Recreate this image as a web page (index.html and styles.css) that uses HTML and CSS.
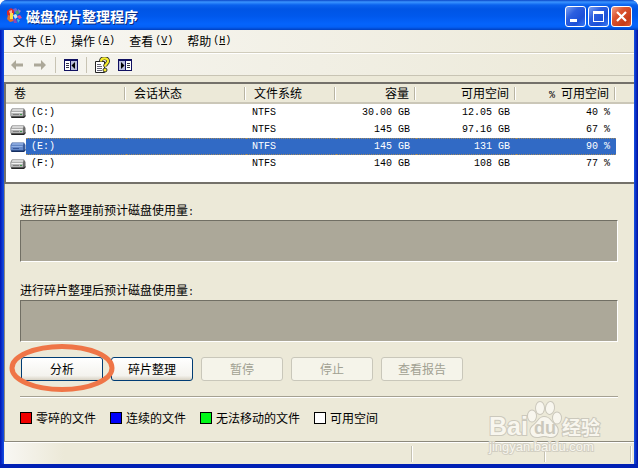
FILE: index.html
```html
<!DOCTYPE html>
<html lang="zh-CN">
<head>
<meta charset="utf-8">
<title>磁盘碎片整理程序</title>
<link rel="stylesheet" href="styles.css">
</head>
<body>
<svg class="defs" aria-hidden="true">
  <symbol id="drive" viewBox="0 0 16 10">
    <path d="M2 0.5H14L15.5 3V8L14 9.5H1.5L0.5 8V3Z" fill="#6c6c6c"/>
    <path d="M2.5 1H13.5L13 3.5H1Z" fill="#d6d6d6"/>
    <path d="M1 3.5H13V8.5H1Z" fill="#b4b4b4"/>
    <path d="M1.500 4H12.500V5H1.500Z" fill="#f2f2f2"/>
    <path d="M3 6H9V7H3Z" fill="#808080"/>
    <path d="M10 6H12V7H10Z" fill="#3f9b4b"/>
    <path d="M1 8.500H14L15.500 7V8.500L14 10H1.500Z" fill="#222"/>
  </symbol>
  <symbol id="drive-on" viewBox="0 0 16 10">
    <path d="M2 0.5H14L15.5 3V8L14 9.5H1.5L0.5 8V3Z" fill="#3a5c9c"/>
    <path d="M2.5 1H13.500L13 3.500H1Z" fill="#86a5dc"/>
    <path d="M1 3.500H13V8.500H1Z" fill="#6488c8"/>
    <path d="M1.500 4H12.500V5H1.500Z" fill="#93b1e6"/>
    <path d="M3 6H9V7H3Z" fill="#39589a"/>
    <path d="M1 8.500H14L15.500 7V8.500L14 10H1.500Z" fill="#152e60"/>
  </symbol>
</svg>
<div class="window">
  <header class="titlebar">
    <svg class="app-icon" viewBox="0 0 16 16" width="16" height="16" aria-hidden="true">
      <path d="M1 3L5 0L8 2V6L4 9L1 7Z" fill="#d92b2b"/>
      <path d="M2 7L6 8L8 13L4 14L1 11Z" fill="#e0722a"/>
      <path d="M3 3L6 2V5L4 6Z" fill="#f6b4a0"/>
      <path d="M4 5H7V11H4Z" fill="#ffe14a"/>
      <path d="M7 1L10 0L12 3L9 5Z" fill="#6d62d8"/>
      <path d="M9 4L12 2L14 5L11 7Z" fill="#46a56a"/>
      <path d="M12 1L15 3L13 5Z" fill="#a07cc8"/>
      <path d="M7 7L10 6L12 9L9 11Z" fill="#c5e8ef"/>
      <path d="M11 8L14 7L16 10L13 11Z" fill="#e34d91"/>
      <path d="M7 11L10 11L11 15L8 15Z" fill="#8947bd"/>
      <path d="M11 11L14 12L12 15Z" fill="#43b5dd"/>
    </svg>
    <h1>磁盘碎片整理程序</h1>
    <div class="controls">
      <button class="ctl" aria-label="最小化"><svg viewBox="0 0 19 19" width="19" height="19"><path d="M4 12H11V15H4Z" fill="#fff"/></svg></button>
      <button class="ctl" aria-label="最大化"><svg viewBox="0 0 19 19" width="19" height="19"><path d="M4 4H15V15H4ZM5 7V14H14V7Z" fill="#fff" fill-rule="evenodd"/></svg></button>
      <button class="ctl close" aria-label="关闭"><svg viewBox="0 0 19 19" width="19" height="19"><path d="M5 5L14 14M14 5L5 14" stroke="#fff" stroke-width="2.200"/></svg></button>
    </div>
  </header>
  <nav class="menubar">
    <button>文件<span class="key">(<u>F</u>)</span></button>
    <button>操作<span class="key">(<u>A</u>)</span></button>
    <button>查看<span class="key">(<u>V</u>)</span></button>
    <button>帮助<span class="key">(<u>H</u>)</span></button>
  </nav>
  <div class="toolbar">
    <div class="group">
      <button aria-label="后退" disabled><svg viewBox="0 0 16 16" width="16" height="16"><path d="M2 8L7 3V6.500H14V9.500H7V13Z" fill="#aca899"/></svg></button>
      <button aria-label="前进" disabled><svg viewBox="0 0 16 16" width="16" height="16"><path d="M14 8L9 3V6.500H2V9.500H9V13Z" fill="#aca899"/></svg></button>
    </div>
    <div class="group">
      <button aria-label="隐藏控制台树"><svg viewBox="0 0 16 16" width="16" height="16"><path d="M1 2H15V14H1Z" fill="#101060"/><path d="M2 4H14V13H2Z" fill="#b9bddb"/><path d="M2 4H7V13H2Z" fill="#fff"/><path d="M7 4H8V13H7Z" fill="#101060"/><path d="M3 6H6M3 8H6M3 10H6" stroke="#334" transform="translate(0 .5)"/><path d="M12 5V12L8.500 8.500Z" fill="#000"/></svg></button>
    </div>
    <div class="group">
      <button aria-label="帮助"><svg viewBox="0 0 16 16" width="16" height="16"><path d="M1.500 4.500H10.500V15.500H1.500Z" fill="#fff" stroke="#222"/><path d="M3 7.500H7M3 9.500H8M3 11.500H8M3 13.500H8" stroke="#667"/><path d="M7 4C7 0 14 0 14 4C14 7 11 7 11 9.500" fill="none" stroke="#333" stroke-width="4"/><path d="M7 4.500C7 0.500 14 0.500 14 4C14 7 11 7 11 9.500" fill="none" stroke="#f7ed2c" stroke-width="2.200"/><circle cx="11" cy="13" r="2" fill="#f7ed2c" stroke="#333"/></svg></button>
      <button aria-label="显示操作窗格"><svg viewBox="0 0 16 16" width="16" height="16"><path d="M1 2H15V14H1Z" fill="#101060"/><path d="M2 4H14V13H2Z" fill="#b9bddb"/><path d="M9 4H14V13H9Z" fill="#fff"/><path d="M8 4H9V13H8Z" fill="#101060"/><path d="M10 6H13M10 8H13M10 10H13" stroke="#334" transform="translate(0 .5)"/><path d="M4 5V12L7.500 8.500Z" fill="#000"/></svg></button>
    </div>
  </div>
  <main>
    <section class="volumes">
      <table>
        <colgroup><col class="c-wide"><col class="c-wide"><col class="c-fs"><col class="c-cap"><col class="c-free"><col class="c-free"><col></colgroup>
        <thead>
          <tr><th>卷</th><th>会话状态</th><th>文件系统</th><th class="num">容量</th><th class="num">可用空间</th><th class="num"><span class="key">% </span>可用空间</th><td></td></tr>
        </thead>
        <tbody>
          <tr><td><div class="vol"><svg width="16" height="10"><use href="#drive"/></svg><span>(C:)</span></div></td><td></td><td>NTFS</td><td class="num">30.00 GB</td><td class="num">12.05 GB</td><td class="num">40 %</td><td></td></tr>
          <tr><td><div class="vol"><svg width="16" height="10"><use href="#drive"/></svg><span>(D:)</span></div></td><td></td><td>NTFS</td><td class="num">145 GB</td><td class="num">97.16 GB</td><td class="num">67 %</td><td></td></tr>
          <tr class="selected"><td><div class="vol"><svg width="16" height="10"><use href="#drive-on"/></svg><span>(E:)</span></div></td><td></td><td>NTFS</td><td class="num">145 GB</td><td class="num">131 GB</td><td class="num">90 %</td><td></td></tr>
          <tr><td><div class="vol"><svg width="16" height="10"><use href="#drive"/></svg><span>(F:)</span></div></td><td></td><td>NTFS</td><td class="num">140 GB</td><td class="num">108 GB</td><td class="num">77 %</td><td></td></tr>
        </tbody>
      </table>
    </section>
    <section class="panel">
      <div class="usage">
        <p>进行碎片整理前预计磁盘使用量<span class="key">:</span></p>
        <div class="bar"></div>
      </div>
      <div class="usage">
        <p>进行碎片整理后预计磁盘使用量<span class="key">:</span></p>
        <div class="bar"></div>
      </div>
      <div class="actions">
        <div class="marked">
          <button class="push">分析</button>
          <svg class="ring" viewBox="0 0 106 50" width="106" height="50" aria-hidden="true"><ellipse cx="53" cy="25" rx="50" ry="21.500" fill="none" stroke="#ef7547" stroke-width="5"/></svg>
        </div>
        <button class="push">碎片整理</button>
        <button class="push" disabled>暂停</button>
        <button class="push" disabled>停止</button>
        <button class="push" disabled>查看报告</button>
      </div>
      <ul class="legend">
        <li><i class="chip red"></i>零碎的文件</li>
        <li><i class="chip blue"></i>连续的文件</li>
        <li><i class="chip green"></i>无法移动的文件</li>
        <li><i class="chip white"></i>可用空间</li>
      </ul>
    </section>
  </main>
  <footer class="status"><div class="cell main-cell"></div><div class="cell mid-cell"></div><div class="cell last-cell"></div></footer>
  <svg class="watermark" viewBox="0 0 120 58" width="120" height="58" aria-hidden="true">
    <g class="mark">
      <text x="3" y="36" class="brand">Bai</text>
      <ellipse cx="46" cy="17" rx="4" ry="5.500"/>
      <ellipse cx="54" cy="9" rx="4" ry="6"/>
      <ellipse cx="64" cy="9" rx="4" ry="6" transform="rotate(8 64 9)"/>
      <ellipse cx="71" cy="19" rx="4" ry="5.500"/>
      <path d="M58 18C64 18 65 23 69 26C74 30 72 38 65 38C61 38 62 37 58 37C54 37 55 38 51 38C44 38 42 30 48 26C52 23 53 18 58 18Z"/>
      <text x="48" y="35" class="du">du</text>
      <text x="76" y="36" class="cn">经验</text>
    </g>
    <text x="3" y="52" class="site">jingyan.baidu.com</text>
  </svg>
</div>
</body>
</html>
```
FILE: styles.css
```css
* { box-sizing: border-box; }

body {
  margin: 0;
  background: #fff;
  color: #000;
  font: 12px/16px "Noto Sans CJK SC", sans-serif;
}

button {
  margin: 0;
  padding: 0;
  border: 0;
  background: none;
  color: inherit;
  font: inherit;
}

svg { display: block; flex: none; }

.defs { position: absolute; width: 0; height: 0; }

.key { font: 10px/10px "Liberation Mono", monospace; }

.window {
  position: relative;
  display: flex;
  flex-direction: column;
  min-height: 100vh;
  padding: 0 4px 4px;
  border-radius: 7px 7px 0 0;
  background: linear-gradient(90deg, #0014b4 0, #1450e4 4px, #1450e4 calc(100% - 4px), #0010a0 100%);
  box-shadow: inset 0 -4px #0020b4;
}

.titlebar {
  display: flex;
  align-items: center;
  height: 30px;
  margin: 0 -4px;
  padding: 2px 6px 0;
  border-radius: 7px 7px 0 0;
  background: linear-gradient(#0a46c8 0, #3a94ff 2px, #0a62ee 5px, #0055e5 9px, #0058ec 16px, #0464fc 24px, #0460f6 27px, #0040c0 30px);
}

h1 {
  flex: 1;
  margin: 0 0 0 4px;
  color: #fff;
  font: bold 14px/20px "Noto Sans CJK SC", sans-serif;
  text-shadow: 1px 1px #0a2a80;
}

.controls { display: flex; gap: 2px; }

.ctl {
  width: 21px;
  height: 21px;
  border: 1px solid #fff;
  border-radius: 3px;
  background: linear-gradient(135deg, #7ba0f0, #2c5fe0 35%, #1c50d8 70%, #3a7af4);
}

.close { background: linear-gradient(135deg, #f0a088, #dc5430 35%, #c83c18 75%, #e05c38); }

.menubar {
  display: flex;
  gap: 14px;
  height: 23px;
  padding: 0 9px;
  border-bottom: 1px solid #d0ccbc;
  background: linear-gradient(90deg, #f8f7f3, #ece9d8);
}

.menubar button { display: flex; align-items: center; }
.menubar .key { padding-left: 2px; }

.toolbar {
  display: flex;
  align-items: center;
  height: 23px;
  padding: 0 5px;
  border-top: 1px solid #fff;
  border-bottom: 1px solid #c8c4b4;
  background: linear-gradient(90deg, #f6f5f0, #ece9d8);
}

.group { display: flex; gap: 7px; }

.group + .group {
  margin-left: 7px;
  padding-left: 7px;
  border-left: 1px solid #c8c4b4;
}

main {
  flex: 1;
  display: flex;
  flex-direction: column;
  padding-top: 6px;
  background: #ece9d8;
}

.volumes {
  height: 102px;
  border: 2px solid #74716a;
  border-width: 2px 0 2px 2px;
  background: #fff;
}

table {
  width: 100%;
  border-collapse: separate;
  border-spacing: 0;
  table-layout: fixed;
}

.c-wide { width: 120px; }
.c-fs { width: 90px; }
.c-cap { width: 80px; }
.c-free { width: 100px; }

thead th, thead td {
  height: 20px;
  padding: 0 8px;
  border-bottom: 2px solid #cbc7b8;
  background: #ece9d8 linear-gradient(90deg, #b8b4a2 50%, #fff 50%) right 3px / 2px 13px no-repeat;
  font-weight: normal;
  text-align: left;
}

thead td { background: #ece9d8; }
thead .num { padding-right: 7px; text-align: right; }
.num { text-align: right; }

tbody td {
  height: 17px;
  padding: 0 6px;
  font: 10px/15px "Liberation Mono", monospace;
}

tbody td:first-child { padding: 0; }

.vol {
  display: flex;
  align-items: center;
  padding-left: 4px;
}

.vol span { flex: 1; padding-left: 5px; }

.selected td:not(:last-child):not(:first-child), .selected .vol span {
  border: 1px dotted #a08a60;
  border-width: 1px 0;
  background: #316ac5;
  color: #fff;
}

.panel {
  flex: 1;
  padding: 18px 16px 14px 15px;
  border-left: 1px solid #8c897c;
  border-bottom: 1px solid #8c897c;
}

.usage { margin-bottom: 20px; }
.usage p { margin: 0 0 2px; }
.panel .usage + .usage { margin-bottom: 15px; }

.bar {
  height: 42px;
  border: 1px solid;
  border-color: #716f64 #fff #fff #716f64;
  background: #aca899;
}

.actions {
  display: flex;
  gap: 8px;
  padding: 0 0 15px 1px;
  border-bottom: 1px solid #a5a192;
  box-shadow: 0 1px #fff;
}

.marked { position: relative; }
.ring { position: absolute; left: -12px; top: -14px; }

.push {
  display: block;
  width: 82px;
  height: 24px;
  border: 1px solid #003c74;
  border-radius: 3px;
  background: linear-gradient(#fff, #f4f3ee 80%, #d8d2c4);
}

.push:disabled {
  border-color: #c9c7ba;
  background: #f5f4ea;
  color: #a1a192;
}

.legend {
  display: flex;
  gap: 14px;
  margin: 0;
  padding: 13px 0 0;
  list-style: none;
}

.legend li { display: flex; align-items: center; gap: 4px; }
.chip { width: 12px; height: 12px; border: 1px solid #000; }
.red { background: #f00000; }
.blue { background: #0000f8; }
.green { background: #00f818; }
.white { background: #fff; }

.status {
  display: flex;
  height: 22px;
  padding: 3px 2px 2px 0;
  border-top: 1px solid #fff;
  background: linear-gradient(90deg, #f8f7f3, #ece9d8 60px);
}

.cell { border-right: 1px solid #fff; box-shadow: inset -1px 0 #c5c2b2; }
.main-cell { flex: 410; }
.mid-cell { flex: 133; }
.last-cell { flex: 85; }

.watermark { position: absolute; right: 32px; bottom: 11px; }
.mark { fill: #f8f6ee; stroke: #cbc8bc; stroke-width: 2; paint-order: stroke; }
.brand { font: bold 25px "Liberation Sans", sans-serif; }
.mark .du { font: bold 18px "Liberation Sans", sans-serif; fill: #cbc8bc; stroke: none; }
.cn { font: bold 19px "Noto Sans CJK SC", sans-serif; }
.site { font: 13px "Liberation Sans", sans-serif; fill: #f8f6ee; stroke: #d2cfc2; stroke-width: 2; paint-order: stroke; }
```
